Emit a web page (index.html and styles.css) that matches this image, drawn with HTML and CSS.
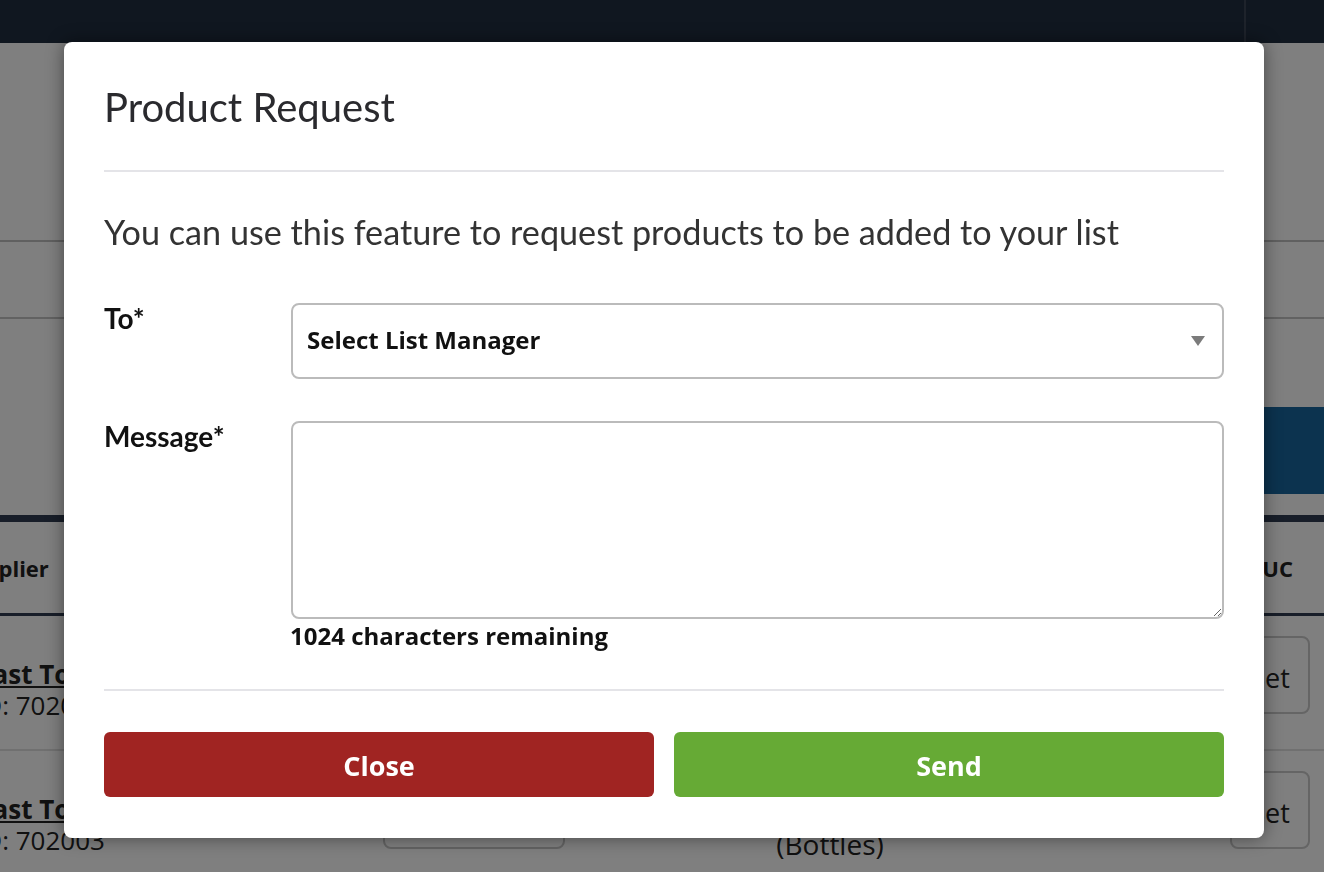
FILE: index.html
```html
<!DOCTYPE html>
<html lang="en">
<head>
    <meta charset="UTF-8">
    <meta name="viewport" content="width=device-width, initial-scale=1.0">
    <title>Product List</title>
    <link rel="stylesheet" href="styles.css">
</head>
<body>
    <div class="page">
        <div class="topbar">
            <div class="topbar-main"></div>
            <div class="topbar-side"></div>
        </div>
        <div class="toolbar"></div>
        <div class="filters"></div>
        <div class="actions">
            <button class="primary-btn">Request Product</button>
        </div>
        <div class="products">
            <div class="products-head">
                <div class="col-supplier"><span class="cut-head">Supplier</span></div>
                <div class="col-qty">Quantity</div>
                <div class="col-unit">Unit</div>
                <div class="col-puc">PUC</div>
            </div>
            <div class="product-row">
                <div class="col-supplier">
                    <a class="item-name" href="#">Breakfast Tomatoes</a>
                    <span class="item-code">ID: 702002</span>
                </div>
                <div class="col-qty"><span class="qty-box"></span></div>
                <div class="col-unit">Case of 12<br>(Bottles)</div>
                <div class="col-puc"><button class="set-btn">Set</button></div>
            </div>
            <div class="product-row">
                <div class="col-supplier">
                    <a class="item-name" href="#">Breakfast Tomatoes</a>
                    <span class="item-code">ID: 702003</span>
                </div>
                <div class="col-qty"><span class="qty-box"></span></div>
                <div class="col-unit">Case of 12<br>(Bottles)</div>
                <div class="col-puc"><button class="set-btn">Set</button></div>
            </div>
        </div>
    </div>

    <div class="backdrop"></div>

    <div class="modal">
        <div class="modal-header">
            <h2>Product Request</h2>
        </div>
        <p class="modal-intro">You can use this feature to request products to be added to your list</p>
        <div class="form-row">
            <label for="manager">To*</label>
            <div class="select-wrap">
                <select id="manager" class="field select-field">
                    <option>Select List Manager</option>
                </select>
                <svg class="select-arrow" width="14" height="10" viewBox="0 0 14 10">
                    <path d="M0 0 H14 L7 10 Z" fill="#7b7b7b"/>
                </svg>
            </div>
        </div>
        <div class="form-row">
            <label for="message">Message*</label>
            <div>
                <textarea id="message" class="field message-field"></textarea>
                <p class="char-count">1024 characters remaining</p>
            </div>
        </div>
        <div class="modal-footer">
            <button class="btn btn-close">Close</button>
            <button class="btn btn-send">Send</button>
        </div>
    </div>
</body>
</html>
```

FILE: styles.css
```css
html, body {
    margin: 0;
    padding: 0;
    height: 100%;
    overflow: hidden;
}

body {
    font-family: "Open Sans", Arial, sans-serif;
    background-color: #fff;
    color: #222;
}

/* page behind the dialog */

.topbar {
    display: flex;
    height: 43px;
    background-color: #202f41;
}

.topbar-main {
    flex: 1;
    border-right: 2px solid #3c4656;
}

.topbar-side {
    width: 78px;
}

.toolbar {
    height: 197px;
    border-bottom: 2px solid #c0c0c0;
}

.filters {
    height: 75px;
    border-bottom: 2px solid #c4c4c4;
}

.actions {
    display: flex;
    justify-content: flex-end;
    height: 196px;
    padding-top: 88px;
    box-sizing: border-box;
}

.primary-btn {
    width: 320px;
    height: 87px;
    border: none;
    background-color: #18669f;
    color: #fff;
    font: 700 24px "Open Sans", sans-serif;
}

.products {
    border-top: 7px solid #303c52;
}

.products-head,
.product-row {
    display: grid;
    grid-template-columns: 360px 240px 460px 1fr;
}

.products-head {
    height: 91px;
    align-items: center;
    border-bottom: 3px solid #303c52;
    font-size: 22px;
    font-weight: 700;
}

.products-head .col-supplier {
    overflow: hidden;
}

.cut-head {
    display: block;
    margin-left: -42px;
}

.products-head .col-qty,
.products-head .col-unit {
    text-align: center;
}

.products-head .col-puc {
    text-align: right;
    padding-right: 31px;
}

.product-row {
    height: 133px;
    border-bottom: 2px solid #e0e0e0;
    font-size: 26px;
}

.product-row .col-supplier {
    padding-top: 43px;
    line-height: 31px;
    white-space: nowrap;
    overflow: hidden;
}

.item-name {
    display: block;
    margin-left: -94px;
    color: #222;
    font-weight: 700;
}

.item-code {
    display: block;
    margin-left: -24px;
}

.product-row .col-qty {
    padding: 20px 0 0 23px;
}

.qty-box {
    display: block;
    width: 182px;
    height: 78px;
    box-sizing: border-box;
    border: 2px solid #c8c8c8;
    border-radius: 8px;
}

.product-row .col-unit {
    padding-top: 38px;
    line-height: 37px;
    font-size: 28px;
    text-align: center;
}

.product-row .col-puc {
    display: flex;
    justify-content: flex-end;
    align-items: flex-start;
    padding: 20px 14px 0 0;
}

.set-btn {
    width: 80px;
    height: 78px;
    padding-top: 5px;
    border: 2px solid #cacaca;
    border-radius: 8px;
    background: #fff;
    color: #222;
    font: 400 27px "Open Sans", sans-serif;
}

/* dialog */

.backdrop {
    position: fixed;
    inset: 0;
    background-color: rgba(0, 0, 0, 0.5);
}

.modal {
    position: absolute;
    left: 64px;
    top: 42px;
    width: 1200px;
    height: 796px;
    padding: 0 40px;
    box-sizing: border-box;
    background-color: #fff;
    border-radius: 8px;
    box-shadow: 0 0 18px rgba(0, 0, 0, 0.45);
}

.modal-header {
    padding: 41px 0 39px;
    border-bottom: 2px solid #e4e4e8;
}

.modal-header h2 {
    margin: 0;
    font: 400 40px/48px Lato, sans-serif;
    color: #2a2a2e;
}

.modal-intro {
    margin: 40px 0 51px;
    font: 400 34.2px/40px Lato, sans-serif;
    color: #333;
}

.form-row {
    display: grid;
    grid-template-columns: 187px 1fr;
    margin-bottom: 42px;
}

.form-row label {
    font: 700 28px/30px Lato, sans-serif;
    color: #111;
}

.field {
    display: block;
    width: 100%;
    box-sizing: border-box;
    border: 2px solid #bbb;
    border-radius: 8px;
    background-color: #fff;
    outline: none;
}

.select-wrap {
    position: relative;
}

.select-field {
    height: 76px;
    padding: 0 50px 4px 14px;
    appearance: none;
    font: 700 24px "Open Sans", sans-serif;
    color: #111;
}

.select-arrow {
    position: absolute;
    right: 19px;
    top: 33px;
}

.message-field {
    height: 198px;
    padding: 12px 14px;
    resize: vertical;
    font: 400 22px "Open Sans", sans-serif;
}

.char-count {
    margin: 2px 0 0 -1px;
    font: 700 24px/30px "Open Sans", sans-serif;
    color: #111;
}

.modal-footer {
    display: grid;
    grid-template-columns: 1fr 1fr;
    gap: 20px;
    margin-top: -4px;
    padding-top: 41px;
    border-top: 2px solid #e4e4e8;
}

.btn {
    height: 65px;
    padding-top: 3px;
    border: none;
    border-radius: 6px;
    color: #fff;
    font: 700 27px "Open Sans", sans-serif;
    cursor: pointer;
}

.btn-close {
    background-color: #a02422;
}

.btn-send {
    background-color: #66aa35;
}
```
